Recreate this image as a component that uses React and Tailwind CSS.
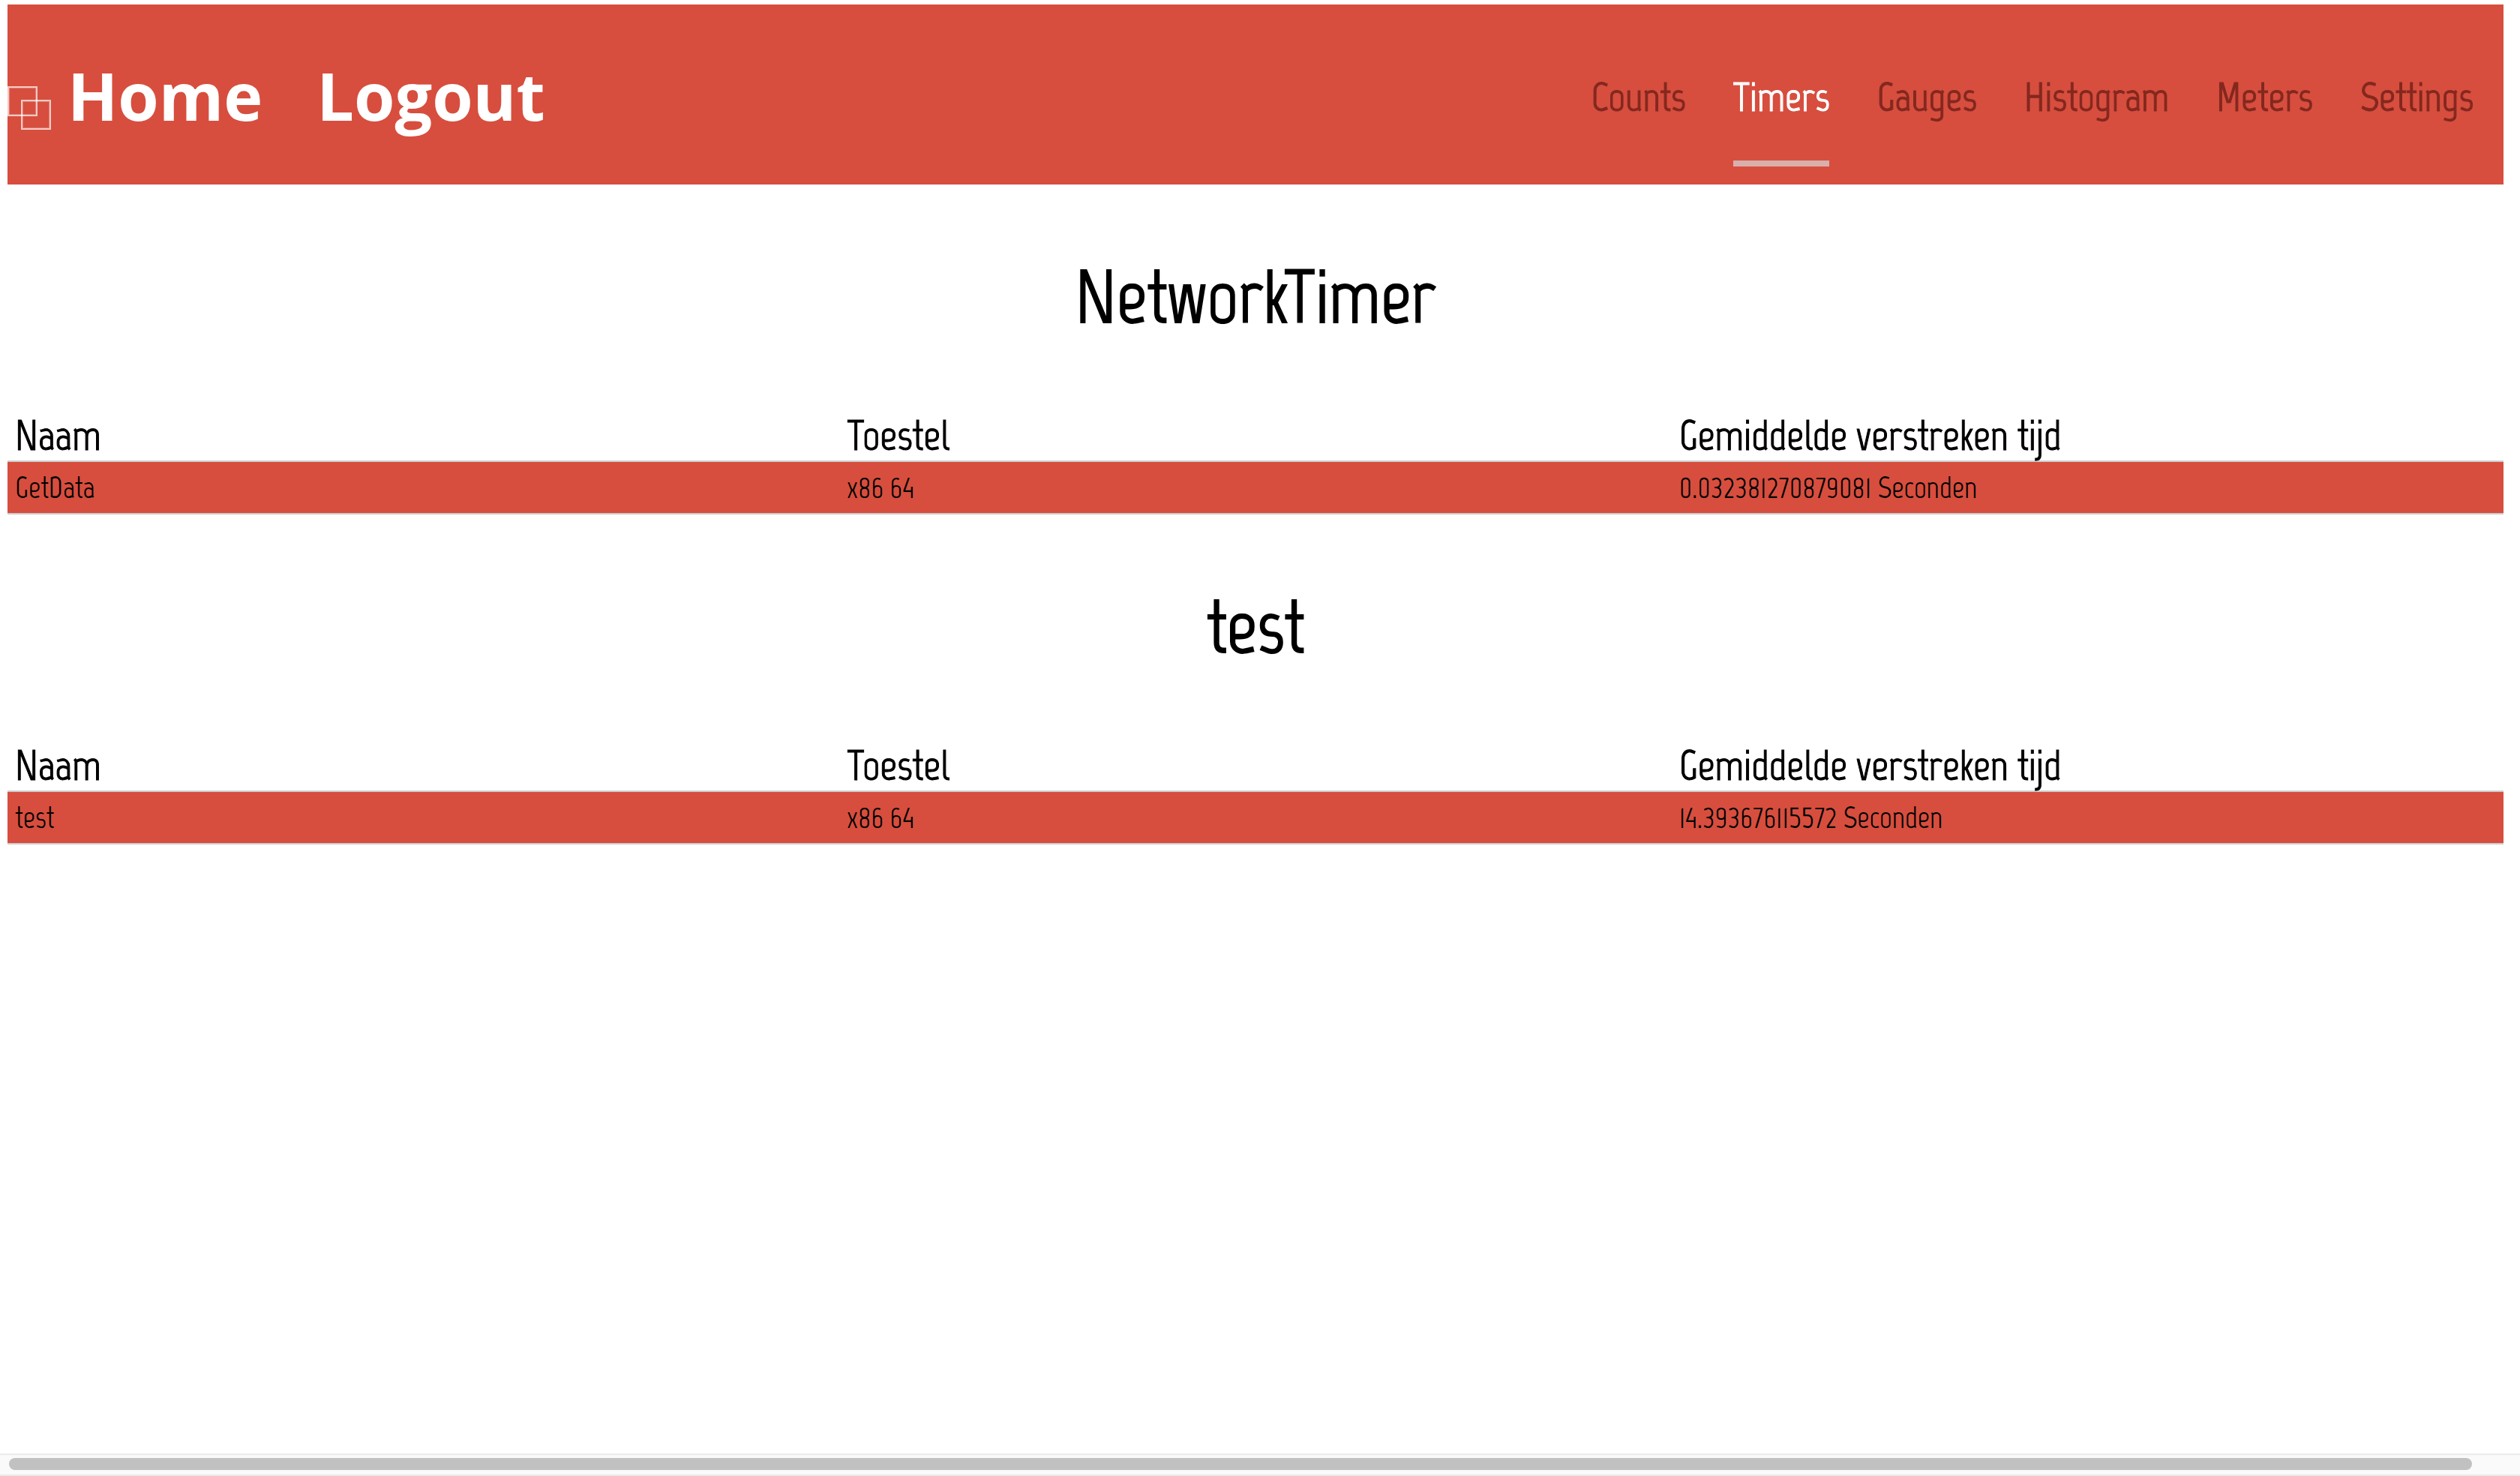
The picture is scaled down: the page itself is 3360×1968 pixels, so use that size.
import React from "react";

const NAV = ["Counts", "Timers", "Gauges", "Histogram", "Meters", "Settings"];

const TIMERS = [
  { title: "NetworkTimer", rows: [["GetData", "x86 64", "0.032381270879081 Seconden"]] },
  { title: "test", rows: [["test", "x86 64", "14.393676115572 Seconden"]] },
];

function LogoIcon() {
  return (
    <svg viewBox="0 0 58 58" className="mt-[34px] size-[58px] shrink-0" fill="none" stroke="#fff" aria-hidden="true">
      <g strokeWidth="2" strokeOpacity="0.7">
        <rect x="1" y="1" width="38" height="38" />
        <rect x="19" y="19" width="38" height="38" />
      </g>
      <g strokeWidth="1" strokeOpacity="0.25">
        <rect x="2.5" y="2.5" width="35" height="35" />
        <rect x="20.5" y="20.5" width="35" height="35" />
      </g>
    </svg>
  );
}

function Header() {
  return (
    <header className="flex min-h-60 items-center justify-between bg-[#d74e3e] pr-10">
      <div className="flex items-center pt-0.5 font-['Open_Sans',sans-serif] text-[88px] leading-[120px] font-bold text-white">
        <LogoIcon />
        <a href="#home" className="ml-[22px]">Home</a>
        <a href="#logout" className="ml-[72px]">Logout</a>
      </div>
      <nav className="flex gap-[63px] self-end pb-6 text-[54px] leading-[72px] text-[#84281f]">
        {NAV.map((item) => (
          <a
            key={item}
            href={`#${item.toLowerCase()}`}
            aria-current={item === "Timers" ? "page" : undefined}
            className={
              item === "Timers"
                ? "border-b-8 border-[#d9b0ab] pb-12 text-white [-webkit-text-stroke:1px]"
                : "border-b-8 border-transparent pb-12 [-webkit-text-stroke:1px]"
            }
          >
            {item}
          </a>
        ))}
      </nav>
    </header>
  );
}

function TimerSection({ title, rows }) {
  return (
    <section>
      <h2 className="pt-[90px] pb-[84px] text-center text-[100px] leading-[120px] [-webkit-text-stroke:2px]">{title}</h2>
      <table className="w-full table-fixed border-collapse text-left">
        <thead>
          <tr className="text-[56px] leading-[66px] [-webkit-text-stroke:1px]">
            <th className="px-2.5 pt-2 font-normal" scope="col">Naam</th>
            <th className="px-2.5 pt-2 font-normal" scope="col">Toestel</th>
            <th className="px-2.5 pt-2 font-normal" scope="col">Gemiddelde verstreken tijd</th>
          </tr>
        </thead>
        <tbody>
          {rows.map((row) => (
            <tr key={row[0]} className="border-y-2 border-[#ccc] bg-[#d74e3e] text-[40px] leading-[68px]">
              {row.map((cell) => (
                <td key={cell} className="px-2.5">{cell}</td>
              ))}
            </tr>
          ))}
        </tbody>
      </table>
    </section>
  );
}

export default function App() {
  return (
    <div className="flex min-h-screen flex-col bg-white font-['Marvel','Open_Sans',sans-serif] text-black">
      <main className="grow pt-1.5 pr-[22px] pl-2.5">
        <Header />
        {TIMERS.map((timer) => (
          <TimerSection key={timer.title} {...timer} />
        ))}
      </main>
      <div className="border-y-2 border-[#ebebeb] bg-[#fafafa] pt-1 pr-16 pb-1.5 pl-3">
        <div className="h-4 rounded-full bg-[#c1c1c1]" />
      </div>
    </div>
  );
}
